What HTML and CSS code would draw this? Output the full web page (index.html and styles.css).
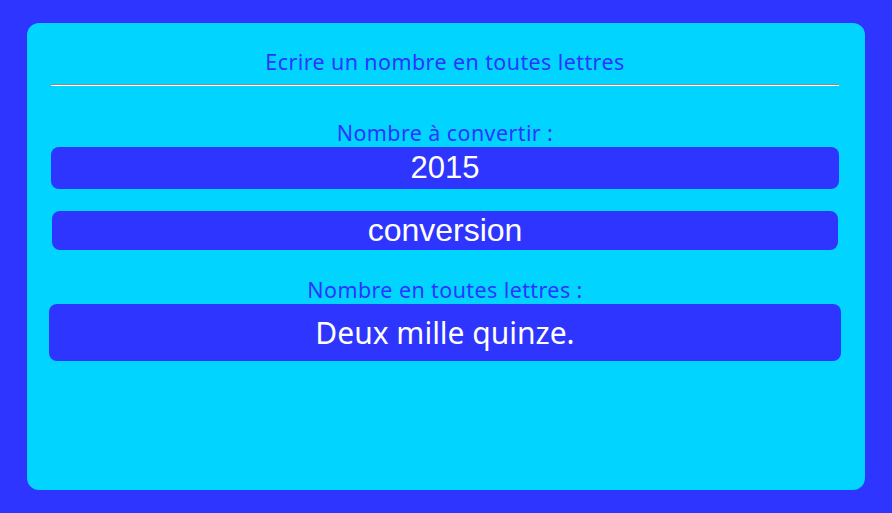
FILE: index.html
```html
<!DOCTYPE html>
<html lang="fr">
<head>
<meta charset="utf-8">
<title>Ecrire un nombre en toutes lettres</title>
<link rel="stylesheet" href="styles.css">
</head>
<body>
<main class="panel">
  <h1 class="title">Ecrire un nombre en toutes lettres</h1>
  <hr class="rule">
  <label class="label label-first" for="nombre">Nombre à convertir :</label>
  <div class="field" id="nombre">2015</div>
  <button class="btn" type="button">conversion</button>
  <div class="label label-second">Nombre en toutes lettres :</div>
  <div class="result">Deux mille quinze.</div>
</main>
</body>
</html>
```

FILE: styles.css
```css
html, body {
  margin: 0;
  padding: 0;
  background: #2e35ff;
  height: 100%;
}
body {
  padding: 23px 27px;
  box-sizing: border-box;
  height: 513px;
  overflow: hidden;
}
.panel {
  background: #00d4ff;
  border-radius: 12px;
  height: 467px;
  box-sizing: border-box;
  padding: 25px 26px 0 24px;
  display: flex;
  flex-direction: column;
  font-family: "Noto Sans", "Open Sans", sans-serif;
  color: #2e35ff;
}
.title {
  margin: 0;
  font-size: 21.5px;
  letter-spacing: 0.4px;
  font-weight: normal;
  line-height: 28px;
  text-align: center;
}
.rule {
  margin: 8px 0 0;
  height: 0;
  border: 0;
  border-top: 1px solid #8a8a8a;
  border-bottom: 1px solid #ffffff;
}
.label {
  display: block;
  font-size: 21.5px;
  letter-spacing: 0.4px;
  line-height: 28px;
  text-align: center;
}
.label-first {
  margin-top: 33px;
}
.label-second {
  margin-top: 26px;
}
.field {
  height: 42px;
  background: #2e35ff;
  border-radius: 8px;
  color: #fff;
  font-family: "Liberation Sans", Arial, sans-serif;
  font-size: 31px;
  line-height: 42px;
  text-align: center;
}
.btn {
  margin: 22px 1px 0 1px;
  height: 39px;
  background: #2e35ff;
  border: 0;
  border-radius: 8px;
  color: #fff;
  font-family: "Liberation Sans", Arial, sans-serif;
  font-size: 32px;
  line-height: 39px;
  padding: 0;
  text-align: center;
}
.result {
  margin: 0 -2px;
  height: 57px;
  background: #2e35ff;
  border-radius: 8px;
  color: #fff;
  font-size: 30px;
  line-height: 57px;
  text-align: center;
}
```
